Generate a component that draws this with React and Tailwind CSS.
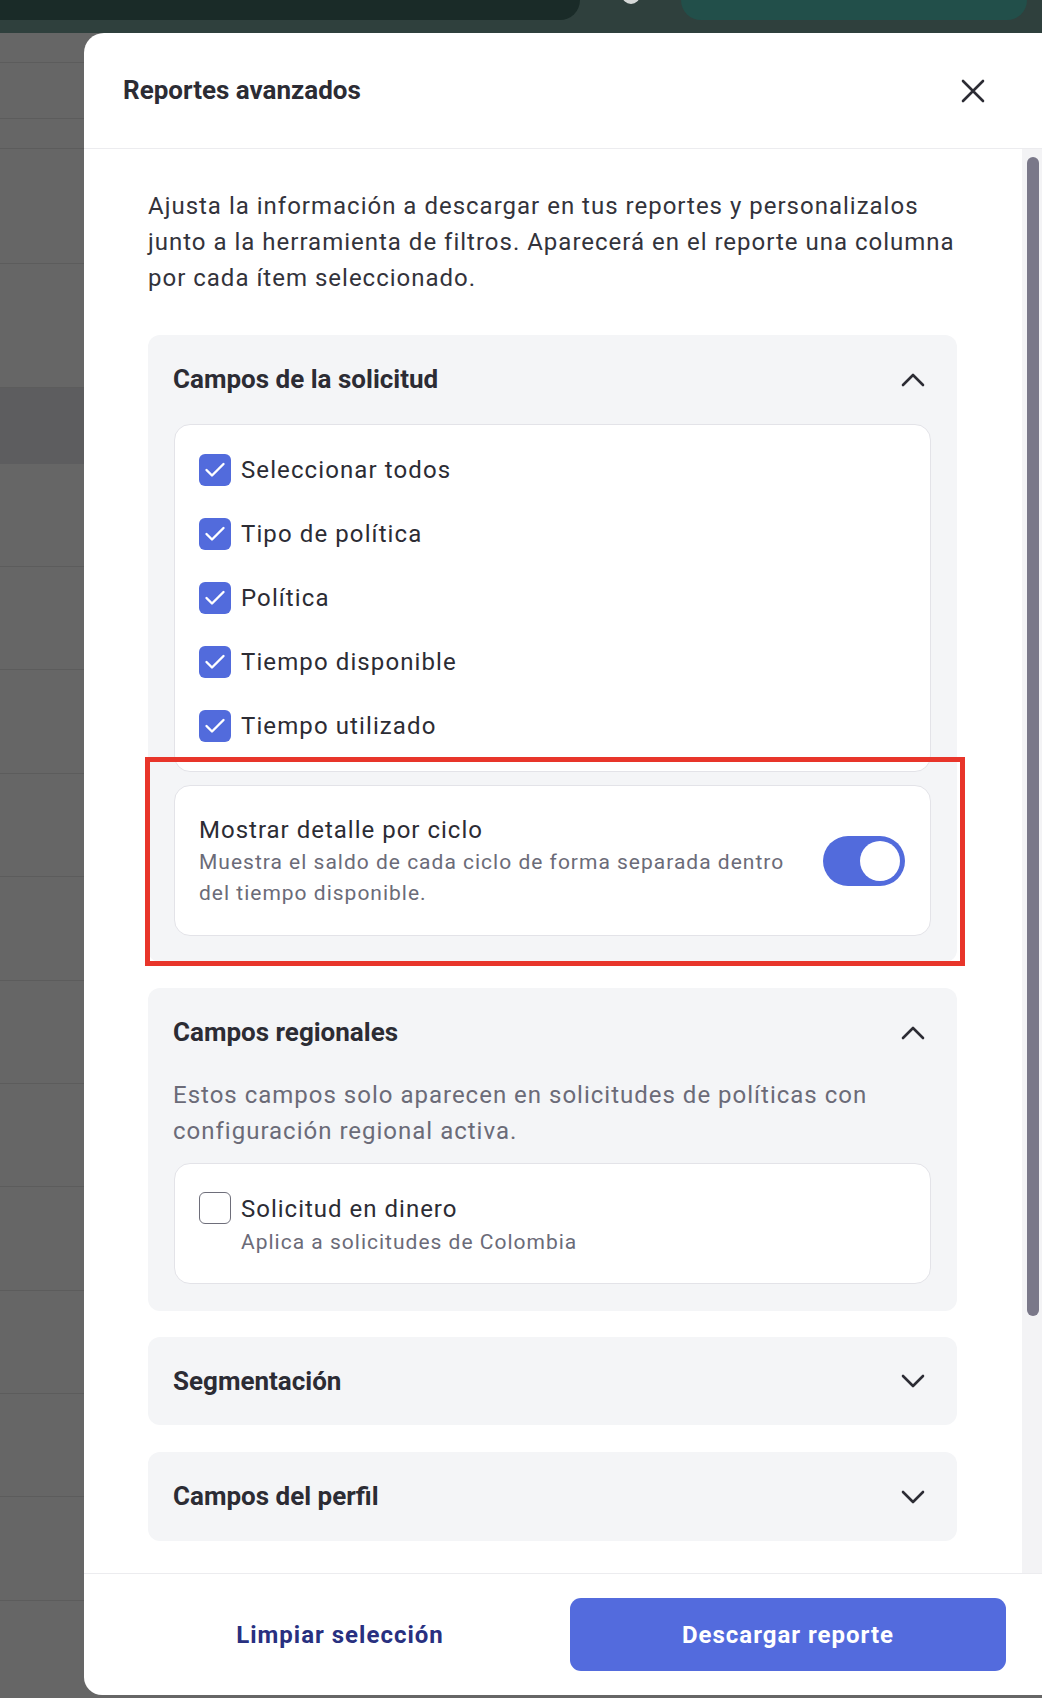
const font = { fontFamily: "Roboto, 'Noto Sans', sans-serif" };

// rows of the dimmed page behind the drawer
const bgRows = [30, 56, 30, 115, 124, 76, 103, 103, 104, 103, 104, 103, 103, 104, 103, 103, 104];

const requestFields = [
  "Seleccionar todos",
  "Tipo de política",
  "Política",
  "Tiempo disponible",
  "Tiempo utilizado",
];

function Chevron({ up }) {
  return (
    <svg width="24" height="14" viewBox="0 0 24 14" fill="none">
      <polyline
        points={up ? "2,12 12,2 22,12" : "2,2 12,12 22,2"}
        stroke="#2c2c34"
        strokeWidth="2.6"
        strokeLinecap="round"
        strokeLinejoin="round"
      />
    </svg>
  );
}

function CheckBox({ checked }) {
  if (!checked) {
    return <div className="w-[32px] h-[32px] shrink-0 rounded-[6px] border-[1.5px] border-[#6e6e7a] bg-white" />;
  }
  return (
    <div className="w-[32px] h-[32px] shrink-0 rounded-[6px] bg-[#526bdc] flex items-center justify-center">
      <svg width="32" height="32" viewBox="0 0 32 32" fill="none">
        <polyline
          points="7.5,16 13,21.5 24.5,10"
          stroke="#fff"
          strokeWidth="2.4"
          strokeLinecap="round"
          strokeLinejoin="round"
        />
      </svg>
    </div>
  );
}

function SectionHeader({ title, open }) {
  return (
    <div className="h-[89px] flex items-center justify-between pl-[25px] pr-[32px]">
      <h3 className="text-[26px] font-bold text-[#2c2c34]">{title}</h3>
      <Chevron up={open} />
    </div>
  );
}

function Toggle({ on }) {
  return (
    <div className={`w-[82px] h-[50px] shrink-0 rounded-full p-[5px] flex ${on ? "bg-[#526bdc] justify-end" : "bg-gray-300 justify-start"}`}>
      <div className="w-[40px] h-[40px] rounded-full bg-white" />
    </div>
  );
}

export default function App() {
  return (
    <div className="relative w-[1042px] h-[1698px] overflow-hidden bg-[#666666]" style={font}>
      {/* app top bar */}
      <div className="h-[33px] bg-[#2f403d] flex items-start">
        <div className="w-[580px] h-[20px] bg-[#1a2b28] rounded-br-[22px]" />
        <div className="ml-[42px] -mt-[14px] w-[18px] h-[18px] rounded-full bg-[#d6d9d8]" />
        <div className="ml-[41px] w-[346px] h-[20px] bg-[#224f4a] rounded-b-[24px]" />
      </div>

      <div className="flex h-[1662px]">
        {/* page behind the drawer */}
        <div className="w-[84px] shrink-0 flex flex-col">
          {bgRows.map((h, i) => (
            <div
              key={i}
              className={i === 5 ? "bg-[#5d5d5f]" : "border-b border-[#5c5c5c]"}
              style={{ height: h }}
            />
          ))}
        </div>

        {/* drawer */}
        <div className="flex-1 bg-white rounded-tl-[20px] rounded-bl-[18px] flex flex-col overflow-hidden">
          <div className="h-[116px] shrink-0 border-b border-[#ececef] flex items-center justify-between pl-[39px] pr-[57px]">
            <h2 className="text-[26px] font-bold text-[#2c2c34]">Reportes avanzados</h2>
            <svg width="24" height="24" viewBox="0 0 24 24" fill="none">
              <path d="M2 2 L22 22 M22 2 L2 22" stroke="#2c2c34" strokeWidth="2.6" strokeLinecap="round" />
            </svg>
          </div>

          <div className="flex-1 flex overflow-hidden">
            <div className="flex-1 pl-[64px] pr-[65px] tracking-[1px]">
              <p className="pt-[39px] text-[24px] leading-[36px] text-[#33333b] whitespace-nowrap">
                Ajusta la información a descargar en tus reportes y personalizalos
                <br />
                junto a la herramienta de filtros. Aparecerá en el reporte una columna
                <br />
                por cada ítem seleccionado.
              </p>

              {/* request fields */}
              <div className="mt-[39px] rounded-[12px] bg-[#f4f5f7] pb-[26px] tracking-normal">
                <SectionHeader title="Campos de la solicitud" open />
                <div className="mx-[26px] rounded-[16px] border border-[#e3e3e8] bg-white py-[13px] px-[24px]">
                  {requestFields.map((label) => (
                    <div key={label} className="h-[64px] flex items-center gap-[10px]">
                      <CheckBox checked />
                      <span className="text-[24px] tracking-[1.1px] text-[#2c2c34]">{label}</span>
                    </div>
                  ))}
                </div>
                <div className="mt-[13px] mx-[26px] h-[151px] rounded-[16px] border border-[#e3e3e8] bg-white flex items-center justify-between pl-[24px] pr-[25px] tracking-[1px]">
                  <div>
                    <div className="text-[24px] leading-[34px] text-[#2c2c34]">Mostrar detalle por ciclo</div>
                    <div className="text-[21px] leading-[31px] text-[#6b6b78] whitespace-nowrap">
                      Muestra el saldo de cada ciclo de forma separada dentro
                      <br />
                      del tiempo disponible.
                    </div>
                  </div>
                  <Toggle on />
                </div>
              </div>

              {/* regional fields */}
              <div className="mt-[26px] rounded-[12px] bg-[#f4f5f7] pb-[27px] tracking-normal">
                <SectionHeader title="Campos regionales" open />
                <p className="px-[25px] text-[24px] leading-[36px] tracking-[1px] text-[#6b6b78] whitespace-nowrap">
                  Estos campos solo aparecen en solicitudes de políticas con
                  <br />
                  configuración regional activa.
                </p>
                <div className="mt-[14px] mx-[26px] h-[121px] rounded-[16px] border border-[#e3e3e8] bg-white pt-[28px] px-[24px] flex items-start gap-[10px] tracking-[1px]">
                  <CheckBox />
                  <div>
                    <div className="text-[24px] leading-[34px] text-[#2c2c34]">Solicitud en dinero</div>
                    <div className="mt-[1px] text-[21px] leading-[30px] text-[#6b6b78]">Aplica a solicitudes de Colombia</div>
                  </div>
                </div>
              </div>

              <div className="mt-[26px] h-[88px] rounded-[12px] bg-[#f4f5f7] flex items-center justify-between pl-[25px] pr-[32px] tracking-normal">
                <h3 className="text-[26px] font-bold text-[#2c2c34]">Segmentación</h3>
                <Chevron />
              </div>
              <div className="mt-[27px] h-[89px] rounded-[12px] bg-[#f4f5f7] flex items-center justify-between pl-[25px] pr-[32px] tracking-normal">
                <h3 className="text-[26px] font-bold text-[#2c2c34]">Campos del perfil</h3>
                <Chevron />
              </div>
            </div>

            {/* scrollbar */}
            <div className="w-[20px] shrink-0 bg-[#f3f3f5] pt-[8px] pl-[5px]">
              <div className="w-[12px] h-[1159px] rounded-full bg-[#7a7889]" />
            </div>
          </div>

          <div className="h-[122px] shrink-0 border-t border-[#ececef] flex items-center pl-[64px] tracking-[1px]">
            <button className="w-[384px] text-[24px] font-bold text-[#283080]">Limpiar selección</button>
            <button className="ml-[38px] w-[436px] h-[73px] rounded-[11px] bg-[#536bdd] text-[24px] font-bold text-white">
              Descargar reporte
            </button>
          </div>
        </div>
      </div>

      {/* highlight frame */}
      <div className="absolute left-[145px] top-[757px] w-[820px] h-[209px] border-[5px] border-[#e8352a]" />
    </div>
  );
}
